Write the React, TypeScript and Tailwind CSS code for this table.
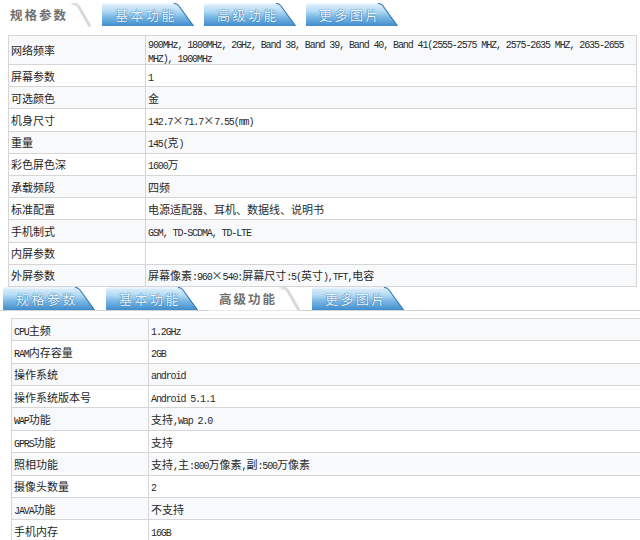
import { Fragment } from "react";

const cjk = "font-['Noto_Sans_CJK_SC','Noto_Sans',sans-serif]";

// ASCII runs use a thin mono face, CJK runs the CJK face
function Mixed({ text }: { text: string }) {
  const parts = text.split(/([\x20-\x7e]+)/).filter((p) => p.length > 0);
  return (
    <>
      {parts.map((p, i) =>
        /^[\x20-\x7e]+$/.test(p) ? (
          <span
            key={i}
            className="font-['Liberation_Mono',monospace] text-[10px] leading-[14px] tracking-[-1.1px] whitespace-pre"
          >
            {p}
          </span>
        ) : (
          <span key={i} className="leading-[14px]">
            {p}
          </span>
        ),
      )}
    </>
  );
}

function Tab({ label, active }: { label: string; active?: boolean }) {
  return (
    <div className="relative h-[23px] w-[92px] shrink-0">
      {active ? (
        <svg className="absolute inset-0" width="92" height="24" viewBox="0 0 92 24">
          <path d="M0 23.5 V0 H72 Q76 0 79 4 L90 23.5" fill="#ffffff" stroke="none" />
          <path d="M72 0.5 Q76 0.5 79 4 L90 23.5" fill="none" stroke="#d9d9d9" strokeWidth="3" />
          <path d="M70 0.5 Q75 0.5 78 3.5" fill="none" stroke="#ececec" strokeWidth="1" />
        </svg>
      ) : (
        <svg className="absolute inset-0" width="92" height="23" viewBox="0 0 92 23">
          <defs>
            <linearGradient id="tabg" x1="0" y1="0" x2="0" y2="1">
              <stop offset="0" stopColor="#e4f1fb" />
              <stop offset="0.35" stopColor="#b5dbf4" />
              <stop offset="0.6" stopColor="#7cb9e6" />
              <stop offset="1" stopColor="#3f8dcc" />
            </linearGradient>
          </defs>
          <path d="M0 3 Q0 0 3 0 H72 Q75 0 77 3 L92 23 H0 Z" fill="url(#tabg)" />
          <path d="M72 0.5 Q75 0.5 77 3 L91.5 23" fill="none" stroke="#3a7db6" strokeWidth="1.2" />
          <path d="M1 1 H71" stroke="#f4faff" strokeWidth="1" />
        </svg>
      )}
      <div
        className={`relative flex h-full items-center pt-[1px] ${cjk} ${
          active
            ? "pl-[10px] text-[12.5px] tracking-[2px] text-[#707070] font-semibold"
            : "pl-[13px] text-[13px] tracking-[2.5px] text-[#eef6fd] [text-shadow:0_0_1px_#2c6ea6,0_0_1px_#2c6ea6]"
        }`}
      >
        {label}
      </div>
    </div>
  );
}

type Row = { k: string; v: string[]; h?: string };

const spec: Row[] = [
  {
    k: "网络频率",
    v: [
      "900MHz, 1800MHz, 2GHz, Band 38, Band 39, Band 40, Band 41(2555-2575 MHZ, 2575-2635 MHZ, 2635-2655",
      "MHZ), 1900MHz",
    ],
    h: "h-[28px]",
  },
  { k: "屏幕参数", v: ["1"] },
  { k: "可选颜色", v: ["金"] },
  { k: "机身尺寸", v: ["142.7×71.7×7.55(mm)"] },
  { k: "重量", v: ["145(克)"] },
  { k: "彩色屏色深", v: ["1600万"] },
  { k: "承载频段", v: ["四频"] },
  { k: "标准配置", v: ["电源适配器、耳机、数据线、说明书"] },
  { k: "手机制式", v: ["GSM, TD-SCDMA, TD-LTE"] },
  { k: "内屏参数", v: [""] },
  { k: "外屏参数", v: ["屏幕像素:960×540:屏幕尺寸:5(英寸),TFT,电容"] },
];

const advanced: Row[] = [
  { k: "CPU主频", v: ["1.2GHz"] },
  { k: "RAM内存容量", v: ["2GB"] },
  { k: "操作系统", v: ["android"] },
  { k: "操作系统版本号", v: ["Android 5.1.1"] },
  { k: "WAP功能", v: ["支持,Wap 2.0"] },
  { k: "GPRS功能", v: ["支持"] },
  { k: "照相功能", v: ["支持,主:800万像素,副:500万像素"] },
  { k: "摄像头数量", v: ["2"] },
  { k: "JAVA功能", v: ["不支持"] },
  { k: "手机内存", v: ["16GB"] },
];

function SpecTable({ rows, rowH, className }: { rows: Row[]; rowH: string; className: string }) {
  return (
    <table className={`border-collapse table-fixed text-[11px] leading-[14px] ${cjk} ${className}`}>
      <colgroup>
        <col className="w-[137px]" />
        <col />
      </colgroup>
      <tbody>
        {rows.map((r, i) => (
          <tr key={r.k} className={`${r.h ?? rowH} ${i % 2 === 0 ? "bg-[#f8f9fb]" : "bg-white"}`}>
            <td className="border border-[#d6d6d6] p-0 pl-[2px] align-middle text-[#1f1f1f]">
              <div className="h-[14px] overflow-hidden whitespace-nowrap">
                <Mixed text={r.k} />
              </div>
            </td>
            <td className="border border-[#d6d6d6] p-0 pl-[2px] align-middle text-[#2a2a2a]">
              {r.v.map((line, j) => (
                <Fragment key={j}>
                  <div className="h-[14px] overflow-hidden whitespace-nowrap">
                    <Mixed text={line} />
                  </div>
                </Fragment>
              ))}
            </td>
          </tr>
        ))}
      </tbody>
    </table>
  );
}

export default function App() {
  return (
    <div className="w-[640px] h-[540px] overflow-hidden bg-white pt-[3px]">
      <div className="flex gap-[10px]">
        <Tab label="规格参数" active />
        <Tab label="基本功能" />
        <Tab label="高级功能" />
        <Tab label="更多图片" />
      </div>

      <SpecTable rows={spec} rowH="h-[22.2px]" className="mt-[9px] ml-[8px] w-[629px]" />

      <div className="flex gap-[11px] border-b border-[#d3d3d3] pl-[3px]">
        <Tab label="规格参数" />
        <Tab label="基本功能" />
        <div className="-mb-px">
          <Tab label="高级功能" active />
        </div>
        <Tab label="更多图片" />
      </div>

      <SpecTable rows={advanced} rowH="h-[22.4px]" className="mt-[7px] ml-[11px] w-[640px]" />
    </div>
  );
}
